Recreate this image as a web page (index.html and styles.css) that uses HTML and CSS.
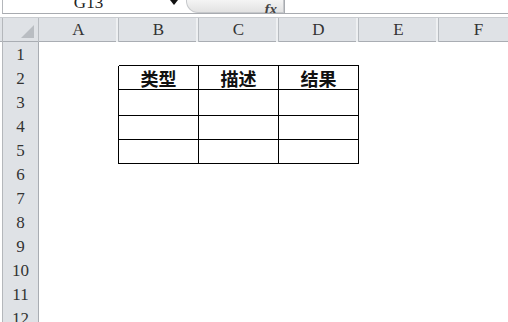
FILE: index.html
```html
<!DOCTYPE html>
<html lang="zh">
<head>
    <meta charset="UTF-8">
    <title>Sheet</title>
    <link rel="stylesheet" href="styles.css">
</head>
<body>
    <div class="topbar">
        <div class="namebox">
            <span class="name">G13</span>
            <span class="drop"></span>
        </div>
        <div class="formula">
            <span class="fx">fx</span>
        </div>
        <div class="input"></div>
    </div>

    <div class="sheet">
        <div class="row head">
            <div class="corner"><span class="tri"></span></div>
            <div class="col">A</div>
            <div class="col">B</div>
            <div class="col">C</div>
            <div class="col">D</div>
            <div class="col">E</div>
            <div class="col">F</div>
        </div>

        <div class="row">
            <div class="num">1</div>
            <div class="cell"></div><div class="cell"></div><div class="cell"></div>
            <div class="cell"></div><div class="cell"></div><div class="cell"></div>
        </div>
        <div class="row">
            <div class="num">2</div>
            <div class="cell edge"></div>
            <div class="cell box top">类型</div>
            <div class="cell box top">描述</div>
            <div class="cell box top">结果</div>
            <div class="cell"></div><div class="cell"></div>
        </div>
        <div class="row">
            <div class="num">3</div>
            <div class="cell edge"></div>
            <div class="cell box"></div><div class="cell box"></div><div class="cell box"></div>
            <div class="cell"></div><div class="cell"></div>
        </div>
        <div class="row">
            <div class="num">4</div>
            <div class="cell edge"></div>
            <div class="cell box"></div><div class="cell box"></div><div class="cell box"></div>
            <div class="cell"></div><div class="cell"></div>
        </div>
        <div class="row">
            <div class="num">5</div>
            <div class="cell edge"></div>
            <div class="cell box"></div><div class="cell box"></div><div class="cell box"></div>
            <div class="cell"></div><div class="cell"></div>
        </div>
        <div class="row"><div class="num">6</div></div>
        <div class="row"><div class="num">7</div></div>
        <div class="row"><div class="num">8</div></div>
        <div class="row"><div class="num">9</div></div>
        <div class="row"><div class="num">10</div></div>
        <div class="row"><div class="num">11</div></div>
        <div class="row"><div class="num">12</div></div>
    </div>
</body>
</html>
```

FILE: styles.css
```css
body {
    margin: 0;
    width: 508px;
    height: 322px;
    overflow: hidden;
    background: #fff;
    font-family: "Liberation Serif", "Noto Sans CJK SC", serif;
    color: #333;
}

.topbar {
    display: flex;
    height: 13px;
    border-bottom: 1px solid #a8abb0;
    border-left: 1px solid #b4b7bb;
    margin-left: 2px;
    overflow: hidden;
}

.namebox {
    width: 181px;
    position: relative;
    text-align: center;
}

.name {
    display: block;
    font-size: 17px;
    line-height: 17px;
    margin-top: -6px;
    margin-left: -10px;
    color: #222;
}

.drop {
    position: absolute;
    left: 167px;
    top: 0;
    width: 0;
    height: 0;
    border-left: 4px solid transparent;
    border-right: 4px solid transparent;
    border-top: 5px solid #111;
}

.formula {
    width: 98px;
    margin-left: 2px;
    background: linear-gradient(#f4f4f4, #e2e2e2);
    border: 1px solid #c6c8cb;
    border-top: none;
    border-radius: 0 0 0 12px;
    text-align: right;
    padding-right: 6px;
    box-sizing: border-box;
}

.fx {
    font-style: italic;
    font-weight: bold;
    font-size: 15px;
    line-height: 15px;
    display: inline-block;
    margin-top: -4px;
    color: #444;
}

.input {
    flex: 1;
    border-left: 1px solid #a8abb0;
}

.sheet {
    margin-top: 3px;
}

.row {
    display: grid;
    grid-template-columns: 39px repeat(6, 80px);
    height: 24px;
}

.head {
    height: 25px;
    background: #dfe2e6;
    border-top: 1px solid #c9ccd0;
    box-sizing: border-box;
    border-bottom: 1px solid #a9adb3;
}

.corner {
    position: relative;
    border-right: 1px solid #b8bcc1;
    border-left: 1px solid #b4b7bb;
    margin-left: 2px;
}

.tri {
    position: absolute;
    right: 4px;
    bottom: 4px;
    width: 0;
    height: 0;
    border-left: 13px solid transparent;
    border-bottom: 13px solid #b9bdc2;
}

.col {
    border-right: 1px solid #b8bcc1;
    box-shadow: inset -2px 0 0 #eef0f2;
    text-align: center;
    font-size: 17px;
    line-height: 24px;
}

.num {
    background: #dfe2e6;
    border-right: 1px solid #a9adb3;
    border-bottom: 1px solid #c3c6cb;
    border-left: 1px solid #b4b7bb;
    margin-left: 2px;
    text-align: center;
    font-size: 17px;
    line-height: 25px;
    box-sizing: border-box;
}

.cell {
    box-sizing: border-box;
    font-family: "Noto Sans CJK SC", sans-serif;
    font-weight: bold;
    font-size: 18px;
    line-height: 23px;
    text-align: center;
    color: #111;
}

.edge {
    border-right: 1px solid #000;
}

.box {
    border-right: 1px solid #000;
    border-bottom: 1px solid #000;
}

.top {
    margin-top: -1px;
    border-top: 1px solid #000;
    height: 25px;
    line-height: 24px;
}
```
